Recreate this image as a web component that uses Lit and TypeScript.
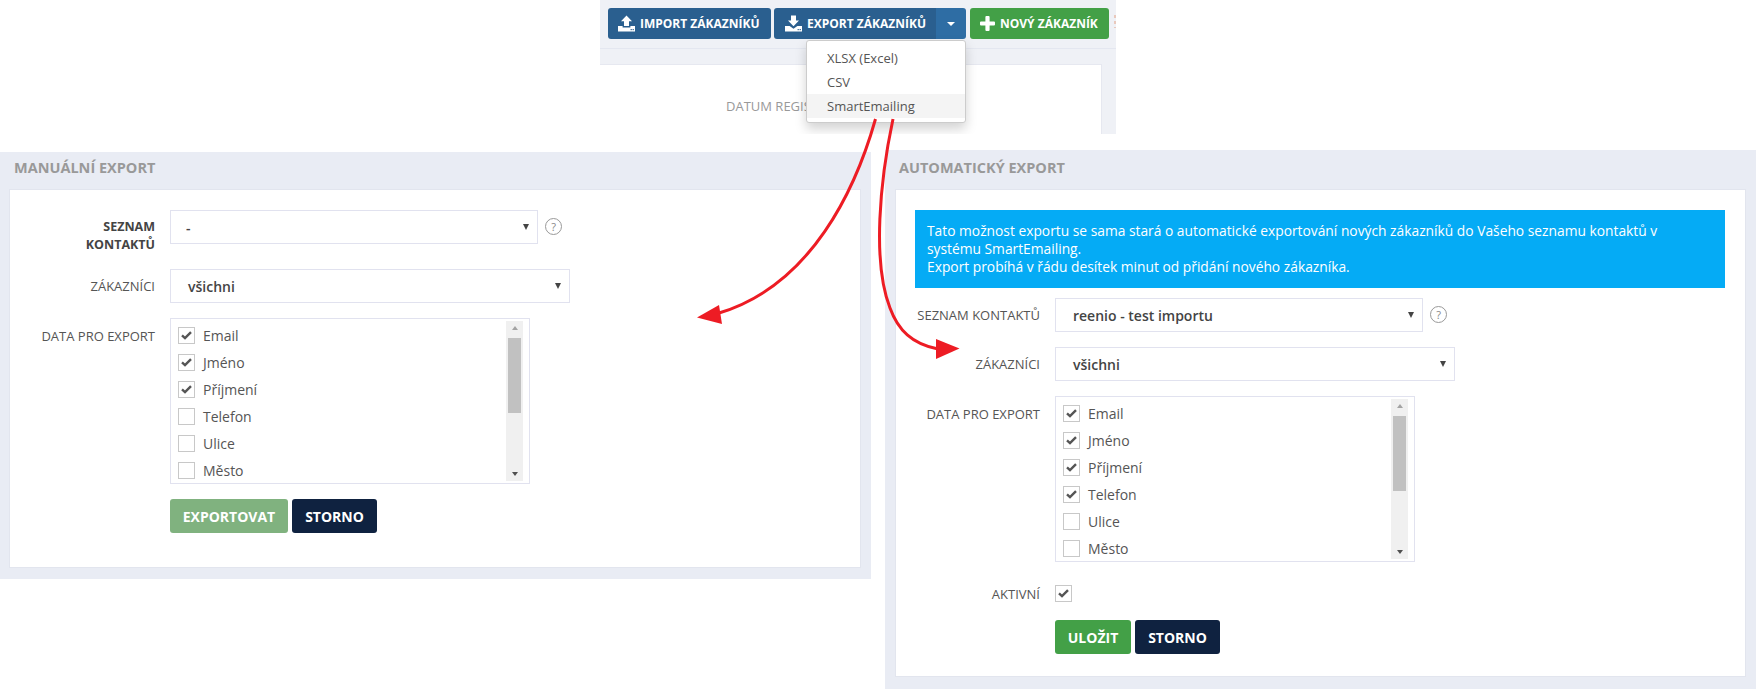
import { LitElement, html, css, svg } from "lit";
import { customElement } from "lit/decorators.js";

const uploadIcon = html`<svg class="ico" width="17" height="17" viewBox="0 0 17 17"><path fill="#fff" d="M8.5 0.5 L14 6.2 H11 V11 H6 V6.2 H3 Z"/><path fill="#fff" d="M0 11 H4.6 V12.4 H12.4 V11 H17 V16.4 H0 Z"/><rect x="12.6" y="14" width="1.2" height="1.2" fill="#2a5f8f"/><rect x="14.6" y="14" width="1.2" height="1.2" fill="#2a5f8f"/></svg>`;
const downloadIcon = html`<svg class="ico" width="17" height="17" viewBox="0 0 17 17"><path fill="#fff" d="M6 0.5 H11 V5.5 H14 L8.5 11.2 L3 5.5 H6 Z"/><path fill="#fff" d="M0 11 H4.6 L8.5 13.8 L12.4 11 H17 V16.4 H0 Z"/><rect x="12.6" y="14" width="1.2" height="1.2" fill="#2a5f8f"/><rect x="14.6" y="14" width="1.2" height="1.2" fill="#2a5f8f"/></svg>`;
const plusIcon = html`<svg class="ico" width="15" height="15" viewBox="0 0 15 15"><path fill="#fff" d="M5.4 1 Q5.4 0 6.4 0 H8.6 Q9.6 0 9.6 1 V5.4 H14 Q15 5.4 15 6.4 V8.6 Q15 9.6 14 9.6 H9.6 V14 Q9.6 15 8.6 15 H6.4 Q5.4 15 5.4 14 V9.6 H1 Q0 9.6 0 8.6 V6.4 Q0 5.4 1 5.4 H5.4 Z"/></svg>`;
const checkMark = html`<svg width="11" height="9" viewBox="0 0 11 9"><path fill="none" stroke="#555" stroke-width="2.4" d="M1 4.4 L4 7.2 L10 1.2"/></svg>`;
const arrows = svg`
  <path fill="none" stroke="#ed1c24" stroke-width="3" d="M875.5 119 C856 188 812 285 719 313"/>
  <path fill="#ed1c24" d="M697 317.5 L719 305 L722 324 Z"/>
  <path fill="none" stroke="#ed1c24" stroke-width="3" d="M893 119 C880 180 872 262 890 308 C898 330 912 344 938 349"/>
  <path fill="#ed1c24" d="M959.5 348.5 L936 339 L936 359 Z"/>`;

@customElement("app-root")
export class AppRoot extends LitElement {
  static styles = css`
    :host { display: block; position: relative; height: 689px; overflow: hidden; background: #fff; font-family: "Open Sans", "Noto Sans", sans-serif; color: #555; }
    * { box-sizing: border-box; }
    .top { position: relative; margin-left: 600px; width: 516px; height: 134px; background: #eff1f6; overflow: hidden; }
    .toolbar { display: flex; align-items: flex-start; height: 49px; padding: 8px 0 0 8px; border-bottom: 1px solid #e4e7f0; }
    .tb { display: flex; align-items: center; height: 31px; border-radius: 3px; background: #2a5f8f; color: #fff; font-size: 12px; font-weight: 700; white-space: nowrap; }
    .tb .ico { flex: none; }
    .import { width: 163px; padding-left: 10px; gap: 5px; margin-right: 3px; }
    .export { width: 162px; padding-left: 11px; gap: 5px; border-radius: 3px 0 0 3px; }
    .caret { width: 30px; justify-content: center; background: #2e6da4; border-radius: 0 3px 3px 0; margin-right: 4px; }
    .caret i { display: block; border: 4px solid transparent; border-top-color: #fff; border-bottom: 0; }
    .new { width: 139px; padding-left: 10px; gap: 5px; background: #43a047; }
    .cut { width: 2px; height: 13px; margin: 7px 0 0 5px; background: repeating-linear-gradient(#e9c9bd 0 3px, transparent 3px 6px); }
    .pagecard { margin-top: 15px; width: 502px; height: 80px; background: #fff; border-top: 1px solid #e6e8f0; border-right: 1px solid #e6e8f0; padding: 32px 0 0 126px; font-size: 13px; line-height: 18px; color: #999; white-space: nowrap; }
    .menu { position: absolute; left: 206px; top: 40px; width: 160px; height: 83px; padding-top: 5px; background: #fff; border: 1px solid #ccc; border-radius: 3px; box-shadow: 0 6px 12px rgba(0,0,0,.175); font-size: 13px; color: #555; }
    .menu div { height: 24px; line-height: 24px; padding-left: 20px; }
    .menu .hover { background: #f4f4f4; }

    .panels { display: flex; align-items: flex-start; justify-content: space-between; }
    .panel { background: #e9ecf4; }
    .left { margin-top: 18px; width: 871px; height: 427px; padding: 0 10px 11px 9px; }
    .right { margin-top: 16px; width: 871px; height: 539px; padding: 0 10px 12px 10px; }
    .title { height: 37px; margin-left: 4px; font-size: 14.5px; line-height: 32px; font-weight: 700; color: #999; white-space: nowrap; }
    .left .title { margin-left: 5px; }
    .right .title { height: 39px; line-height: 36px; }
    .card { background: #fff; border: 1px solid #e2e5ee; }
    .left .card { height: 379px; padding: 20px 0 0 1px; }
    .right .card { height: 488px; padding-top: 20px; }
    .info { margin: 0 20px 10px 19px; height: 78px; padding: 12px; background: #05abf5; color: #fff; font-size: 13.8px; line-height: 18px; white-space: nowrap; }
    .fr { display: flex; align-items: flex-start; margin-bottom: 15px; }
    .lab { flex: none; width: 144px; margin-right: 15px; text-align: right; font-size: 13px; line-height: 18px; padding-top: 8px; color: #555; white-space: nowrap; }
    .lab.b { font-size: 12.5px; font-weight: 700; height: 44px; color: #444; }
    .lab.lt { padding-top: 9px; }
    .lab.act { padding-top: 0; }
    .sel { flex: none; display: flex; align-items: center; justify-content: space-between; height: 34px; padding: 0 8px 0 17px; border: 1px solid #e1e2ef; background: #fff; font-size: 14px; font-weight: 600; color: #444; }
    .sel.dash { padding-left: 15px; }
    .w368 { width: 368px; }
    .w400 { width: 400px; }
    .sel i { display: block; border: 3.5px solid transparent; border-top: 6px solid #444; border-bottom: 0; }
    .help { flex: none; width: 17px; height: 17px; margin: 8px 0 0 7px; border: 1px solid #999; border-radius: 50%; font-size: 11px; line-height: 15px; text-align: center; color: #888; }
    .list { flex: none; position: relative; width: 360px; height: 166px; border: 1px solid #e1e2ef; overflow: hidden; padding: 8px 0 0 7px; }
    .it { display: flex; align-items: center; gap: 8px; height: 17px; margin-bottom: 10px; font-size: 14px; color: #555; }
    .cb { flex: none; display: flex; align-items: center; justify-content: center; width: 17px; height: 17px; border: 1px solid #c8c8c8; background: #fff; }
    .sb { position: absolute; right: 6px; top: 2px; width: 17px; height: 160px; background: #f0f0f0; display: flex; flex-direction: column; align-items: center; justify-content: space-between; padding: 5px 0; }
    .sb .up { border: 3.5px solid transparent; border-bottom: 4px solid #a3a3a3; border-top: 0; }
    .sb .dn { border: 3.5px solid transparent; border-top: 4px solid #505050; border-bottom: 0; }
    .sb .th { position: absolute; left: 2px; top: 17px; width: 13px; height: 75px; background: #c1c1c1; }
    .btns { display: flex; gap: 4px; margin-left: 159px; }
    .btn { display: flex; align-items: center; justify-content: center; height: 34px; border-radius: 3px; color: #fff; font-size: 14px; font-weight: 700; }
    .exp { width: 118px; background: #80b27f; }
    .sto { width: 85px; background: #0f2240; }
    .sav { width: 76px; background: #43a047; }
    .pad { margin-bottom: 17px; }
    .pad2 { margin-bottom: 23px; }
    .arrows { position: absolute; left: 0; top: 0; pointer-events: none; }
  `;

  private list(labels: string[], checked: number) {
    return html`<div class="list">
      ${labels.map((l, i) => html`<div class="it"><span class="cb">${i < checked ? checkMark : ""}</span>${l}</div>`)}
      <div class="sb"><span class="up"></span><span class="th"></span><span class="dn"></span></div>
    </div>`;
  }

  render() {
    const fields = ["Email", "Jméno", "Příjmení", "Telefon", "Ulice", "Město"];
    return html`
      <div class="top">
        <div class="toolbar">
          <div class="tb import">${uploadIcon}IMPORT ZÁKAZNÍKŮ</div>
          <div class="tb export">${downloadIcon}EXPORT ZÁKAZNÍKŮ</div>
          <div class="tb caret"><i></i></div>
          <div class="tb new">${plusIcon}NOVÝ ZÁKAZNÍK</div>
          <div class="cut"></div>
        </div>
        <div class="pagecard">DATUM REGISTRACE</div>
        <div class="menu"><div>XLSX (Excel)</div><div>CSV</div><div class="hover">SmartEmailing</div></div>
      </div>
      <div class="panels">
        <section class="panel left">
          <div class="title">MANUÁLNÍ EXPORT</div>
          <div class="card">
            <div class="fr"><div class="lab b">SEZNAM<br />KONTAKTŮ</div><div class="sel w368 dash">-<i></i></div><div class="help">?</div></div>
            <div class="fr"><div class="lab">ZÁKAZNÍCI</div><div class="sel w400">všichni<i></i></div></div>
            <div class="fr"><div class="lab lt">DATA PRO EXPORT</div>${this.list(fields, 3)}</div>
            <div class="btns"><div class="btn exp">EXPORTOVAT</div><div class="btn sto">STORNO</div></div>
          </div>
        </section>
        <section class="panel right">
          <div class="title">AUTOMATICKÝ EXPORT</div>
          <div class="card">
            <div class="info">Tato možnost exportu se sama stará o automatické exportování nových zákazníků do Vašeho seznamu kontaktů v<br />systému SmartEmailing.<br />Export probíhá v řádu desítek minut od přidání nového zákazníka.</div>
            <div class="fr"><div class="lab">SEZNAM KONTAKTŮ</div><div class="sel w368">reenio - test importu<i></i></div><div class="help">?</div></div>
            <div class="fr"><div class="lab">ZÁKAZNÍCI</div><div class="sel w400">všichni<i></i></div></div>
            <div class="fr pad2"><div class="lab lt">DATA PRO EXPORT</div>${this.list(fields, 4)}</div>
            <div class="fr pad"><div class="lab act">AKTIVNÍ</div><span class="cb">${checkMark}</span></div>
            <div class="btns"><div class="btn sav">ULOŽIT</div><div class="btn sto">STORNO</div></div>
          </div>
        </section>
      </div>
      <svg class="arrows" width="1756" height="689" viewBox="0 0 1756 689">${arrows}</svg>
    `;
  }
}
